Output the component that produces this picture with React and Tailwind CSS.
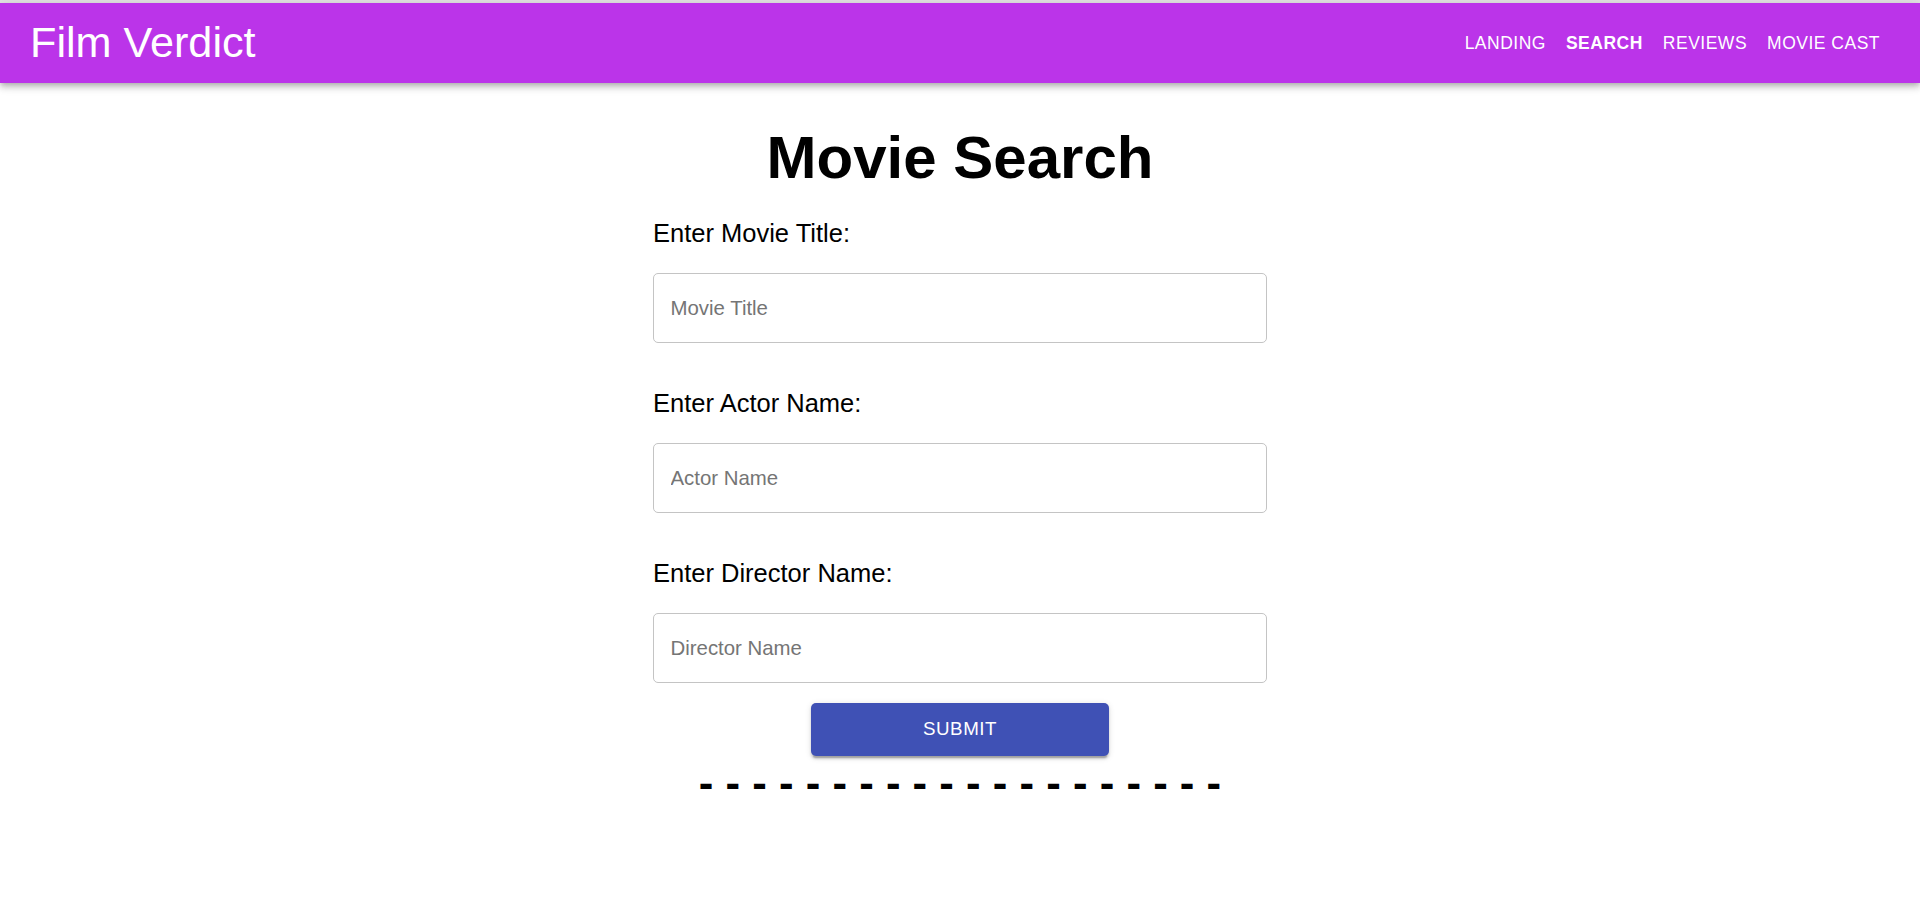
import React from "react";

const NAV = [
  { label: "LANDING", active: false },
  { label: "SEARCH", active: true },
  { label: "REVIEWS", active: false },
  { label: "MOVIE CAST", active: false },
];

const FIELDS = [
  { label: "Enter Movie Title:", placeholder: "Movie Title" },
  { label: "Enter Actor Name:", placeholder: "Actor Name" },
  { label: "Enter Director Name:", placeholder: "Director Name" },
];

export default function App() {
  const dashes = Array.from({ length: 20 }, () => "-").join(" ");
  return (
    <div className="min-h-screen bg-white font-['Liberation_Sans',Arial,sans-serif] text-black">
      <div className="h-[3px] bg-[#e3e3e3]" />
      <header className="relative z-10 flex h-[80px] items-center justify-between bg-[#bb34e9] px-[30px] text-white shadow-[0px_2.5px_5px_-1.25px_rgba(0,0,0,0.2),0px_5px_6px_0px_rgba(0,0,0,0.14),0px_1.25px_12.5px_0px_rgba(0,0,0,0.12)]">
        <div className="text-[43.2px] leading-[1.235]">Film Verdict</div>
        <nav className="flex items-center">
          {NAV.map((n) => (
            <button
              key={n.label}
              className={`px-[10px] py-[7.5px] text-[17.5px] leading-[1.75] tracking-[0.02857em] text-white ${
                n.active ? "font-bold" : "font-normal"
              }`}
            >
              {n.label}
            </button>
          ))}
        </nav>
      </header>

      <main className="flex flex-col items-center pt-[39.5px]">
        <h1 className="text-[60px] font-bold leading-[70px]">Movie Search</h1>

        <div className="mt-[20.5px] flex w-[614px] flex-col">
          {FIELDS.map((f, i) => (
            <div key={f.label} className={`flex flex-col ${i > 0 ? "mt-[40px]" : ""}`}>
              <label className="text-[25.5px] leading-[40px]">{f.label}</label>
              <input
                type="text"
                placeholder={f.placeholder}
                className="mt-[20px] h-[70px] w-full rounded-[5px] border border-[#c4c4c4] bg-white px-[16.5px] text-[20.4px] text-black outline-none placeholder:text-[#757575]"
              />
            </div>
          ))}
        </div>

        <button className="mt-[20px] h-[52.5px] w-[298px] rounded-[5px] bg-[#3f51b5] text-[18.75px] tracking-[0.02857em] text-white shadow-[0px_3.75px_1.25px_-2.5px_rgba(0,0,0,0.2),0px_2.5px_2.5px_0px_rgba(0,0,0,0.14),0px_1.25px_6.25px_0px_rgba(0,0,0,0.12)]">
          SUBMIT
        </button>

        <div className="mt-[5px] whitespace-pre text-[43.75px] font-bold leading-none">{dashes}</div>
      </main>
    </div>
  );
}
